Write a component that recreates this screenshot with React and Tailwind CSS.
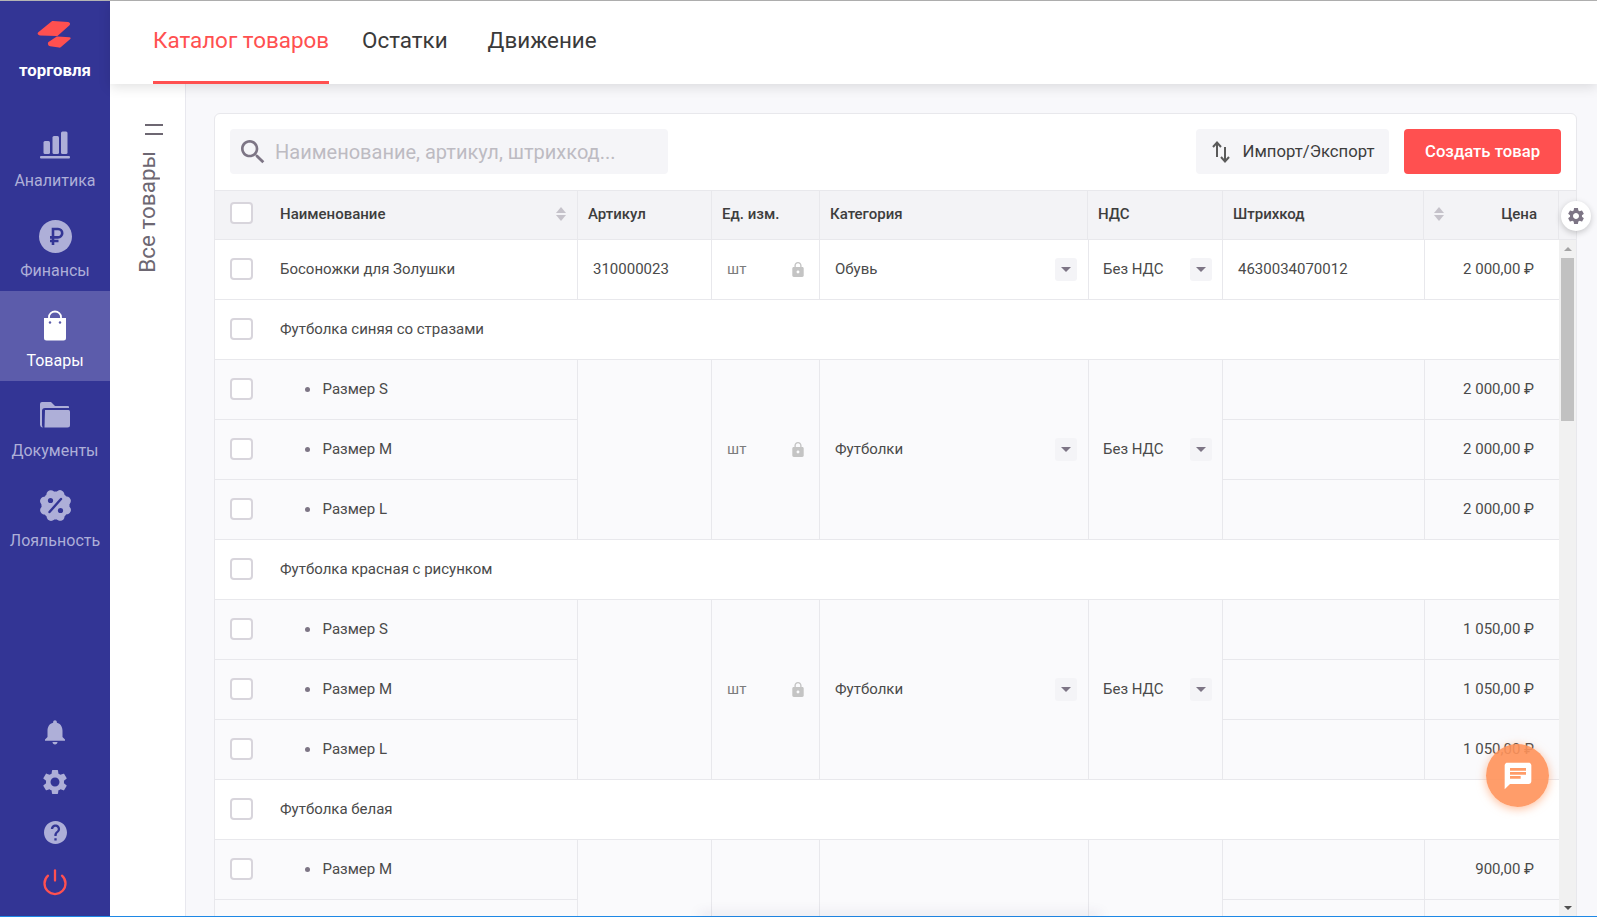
import React from "react";

const GEAR = "M19.14,12.94c0.04-0.3,0.06-0.61,0.06-0.94c0-0.32-0.02-0.64-0.07-0.94l2.03-1.58c0.18-0.14,0.23-0.41,0.12-0.61l-1.92-3.32c-0.12-0.22-0.37-0.29-0.59-0.22l-2.39,0.96c-0.5-0.38-1.03-0.7-1.62-0.94L14.4,2.81c-0.04-0.24-0.24-0.41-0.48-0.41h-3.84c-0.24,0-0.43,0.17-0.47,0.41L9.25,5.35C8.66,5.59,8.12,5.92,7.63,6.29L5.24,5.33c-0.22-0.08-0.47,0-0.59,0.22L2.74,8.87C2.62,9.08,2.66,9.34,2.86,9.48l2.03,1.58C4.84,11.36,4.8,11.69,4.8,12s0.02,0.64,0.07,0.94l-2.03,1.58c-0.18,0.14-0.23,0.41-0.12,0.61l1.92,3.32c0.12,0.22,0.37,0.29,0.59,0.22l2.39-0.96c0.5,0.38,1.03,0.7,1.62,0.94l0.36,2.54c0.05,0.24,0.24,0.41,0.48,0.41h3.84c0.24,0,0.44-0.17,0.47-0.41l0.36-2.54c0.59-0.24,1.13-0.56,1.62-0.94l2.39,0.96c0.22,0.08,0.47,0,0.59-0.22l1.92-3.32c0.12-0.22,0.07-0.47-0.12-0.61L19.14,12.94z M12,15.6c-1.98,0-3.6-1.62-3.6-3.6s1.62-3.6,3.6-3.6s3.6,1.62,3.6,3.6S13.98,15.6,12,15.6z";

function Logo() {
  return (
    <svg width="36" height="30" viewBox="0 0 36 30" className="block">
      <path d="M1 12.5 14.5 1.5c.5-.4 1-.5 1.6-.5l15 1c1.8.2 2.6 2 1.4 3.2L21 15.5c-.5.5-1 .6-1.6.5L3 15.5c-2-.2-3-1.8-2-3z" fill="#ff5050" />
      <path d="M11.500 22 19 17c.5-.3 1-.4 1.500-.4l12 .6c1.200.1 1.500 1.200.8 1.800L24 27c-.6.5-1.200.7-2 .6l-8.800-1.300c-2-.3-3-3-1.700-4.300z" fill="#ff5050" />
    </svg>
  );
}

const iconColor = "#aeafd8";
const navIcons = {
  chart: (
    <svg width="30" height="28" viewBox="0 0 30 28">
      <rect x="3.500" y="10" width="6.500" height="13" rx="1.500" fill={iconColor} />
      <rect x="12.500" y="5" width="6.500" height="18" rx="1.500" fill={iconColor} />
      <rect x="21" y="0.500" width="6.500" height="22.500" rx="1.500" fill={iconColor} />
      <rect x="0" y="25" width="30" height="2.500" rx="1" fill={iconColor} />
    </svg>
  ),
  ruble: (
    <svg width="33" height="33" viewBox="0 0 33 33">
      <circle cx="16.500" cy="16.500" r="16.500" fill={iconColor} />
      <path d="M14 25V9h5a4.200 4.200 0 0 1 0 8.400h-8M11 21h8.500" fill="none" stroke="#333595" strokeWidth="2.600" />
    </svg>
  ),
  bag: (
    <svg width="24" height="31" viewBox="0 0 24 31">
      <path d="M6 8V7a6 5.500 0 0 1 12 0v1" fill="none" stroke="#fff" strokeWidth="1.800" />
      <path d="M1 8h22v20a2.500 2.500 0 0 1-2.500 2.500h-17A2.500 2.500 0 0 1 1 28z" fill="#fff" />
      <circle cx="7" cy="12.500" r="1.200" fill="#5c5cab" />
      <circle cx="17" cy="12.500" r="1.200" fill="#5c5cab" />
    </svg>
  ),
  folder: (
    <svg width="30" height="26" viewBox="0 0 30 26">
      <path d="M0 2a2 2 0 0 1 2-2h9l4 4h13a1 1 0 0 1 1 1v1H5a3 3 0 0 0-3 3v14c0 1 .5 2 1 2.500A3 3 0 0 1 0 23z" fill={iconColor} />
      <path d="M5 8h23.500A1.500 1.500 0 0 1 30 9.500V23a2.500 2.500 0 0 1-2.500 2.500H4.500z" fill={iconColor} />
    </svg>
  ),
  percent: (
    <svg width="33" height="33" viewBox="0 0 33 33">
      <circle cx="16.500" cy="16.500" r="14" fill={iconColor} />
      {[0, 45, 90, 135, 180, 225, 270, 315].map(a => (
        <circle key={a} cx="16.500" cy="4.500" r="4.300" fill={iconColor} transform={`rotate(${a + 22} 16.500 16.500)`} />
      ))}
      <circle cx="11.500" cy="11.500" r="2.600" fill="#333595" />
      <circle cx="21.500" cy="21.500" r="2.600" fill="#333595" />
      <path d="M22 10 10.500 23" stroke="#333595" strokeWidth="2.400" strokeLinecap="round" />
    </svg>
  ),
};

const navItems = [
  { key: "chart", label: "Аналитика", slot: "pb-[6px]" },
  { key: "ruble", label: "Финансы", slot: "pb-[2px]" },
  { key: "bag", label: "Товары", active: true, slot: "pb-[4px]" },
  { key: "folder", label: "Документы", slot: "pb-[7px]" },
  { key: "percent", label: "Лояльность", slot: "pb-[3px]" },
];

function Sidebar() {
  return (
    <aside className="flex w-[110px] shrink-0 flex-col bg-[#333595]">
      <div className="flex h-[110px] flex-col items-center pt-[19px]">
        <Logo />
        <div className="mt-[10px] text-[16.800px] leading-[20px] font-bold text-white">торговля</div>
      </div>
      <nav className="flex flex-col">
        {navItems.map(item => (
          <div
            key={item.key}
            className={`flex h-[90px] flex-col items-center ${item.active ? "bg-[#5c5cab] text-white" : "text-[#aeafd8]"}`}
          >
            <div className={`flex h-[54px] items-end justify-center ${item.slot}`}>{navIcons[item.key]}</div>
            <div className="mt-[6px] text-[16px] leading-[20px]">{item.label}</div>
          </div>
        ))}
      </nav>
      <div className="mt-auto flex flex-col items-center pb-[20px]">
        <svg width="30" height="30" viewBox="0 0 24 24" fill={iconColor} className="mb-[20px]">
          <path d="M12 22c1.100 0 2-.9 2-2h-4c0 1.100.89 2 2 2zm6-6v-5c0-3.070-1.640-5.640-4.500-6.320V4c0-.83-.67-1.500-1.500-1.500s-1.500.67-1.500 1.500v.68C7.630 5.360 6 7.920 6 11v5l-2 2v1h16v-1l-2-2z" />
        </svg>
        <svg width="30" height="30" viewBox="0 0 24 24" fill={iconColor} fillRule="evenodd" className="mb-[24px]">
          <path d={GEAR} />
        </svg>
        <svg width="23" height="23" viewBox="2 2 20 20" fill={iconColor} className="mb-[25px]">
          <path d="M12 2C6.480 2 2 6.480 2 12s4.480 10 10 10 10-4.480 10-10S17.520 2 12 2zm1 17h-2v-2h2v2zm2.070-7.750l-.9.920C13.450 12.900 13 13.500 13 15h-2v-.5c0-1.100.45-2.100 1.170-2.830l1.240-1.260c.37-.36.59-.86.59-1.410 0-1.100-.9-2-2-2s-2 .9-2 2H8c0-2.210 1.790-4 4-4s4 1.790 4 4c0 .88-.36 1.680-.93 2.250z" />
        </svg>
        <svg width="26" height="27" viewBox="0 0 26 27" fill="none" stroke="#ff5050" strokeWidth="2.300" strokeLinecap="round">
          <path d="M6 6.700a10.500 10.500 0 1 0 14 0" />
          <path d="M13 1.500v10" />
        </svg>
      </div>
    </aside>
  );
}

function Tabs() {
  return (
    <header className="relative z-10 flex h-[83px] shrink-0 bg-white pl-[43px] text-[22.400px] leading-[78px] text-[#3a3a3a] shadow-[0_3px_12px_rgba(0,0,0,0.12)]">
      <div className="h-[83px] border-b-[3px] border-[#ff5050] text-[#ff5050]">Каталог товаров</div>
      <div className="ml-[33px]">Остатки</div>
      <div className="ml-[40px]">Движение</div>
    </header>
  );
}

function Checkbox() {
  return <span className="-mt-[2px] block h-[22px] w-[23px] shrink-0 rounded-[4px] border-2 border-[#d8d5dc] bg-white" />;
}

function Dropdown() {
  return (
    <span className="flex h-[23px] w-[22px] items-center justify-center rounded-[3px] bg-[#f4f4f7]">
      <span className="h-0 w-0 border-x-[5px] border-t-[5px] border-x-transparent border-t-[#7d7585]" />
    </span>
  );
}

function Lock() {
  return (
    <svg width="12" height="15" viewBox="4 1 16 21" fill="#c4c4c4">
      <path d="M18 8h-1V6c0-2.760-2.240-5-5-5S7 3.240 7 6v2H6c-1.100 0-2 .9-2 2v10c0 1.100.9 2 2 2h12c1.100 0 2-.9 2-2V10c0-1.100-.9-2-2-2zm-6 9c-1.100 0-2-.9-2-2s.9-2 2-2 2 .9 2 2-.9 2-2 2zm3.100-9H8.900V6c0-1.710 1.390-3.100 3.100-3.100 1.710 0 3.100 1.390 3.100 3.100v2z" />
    </svg>
  );
}

function SortArrows() {
  return (
    <span className="flex flex-col gap-[2px]">
      <span className="h-0 w-0 border-x-[5px] border-b-[6px] border-x-transparent border-b-[#c5c2ca]" />
      <span className="h-0 w-0 border-x-[5px] border-t-[6px] border-x-transparent border-t-[#c5c2ca]" />
    </span>
  );
}

const line = "border-b border-[#e8e8ec]";
const cellLine = "border-b border-r border-[#e8e8ec]";

function NameCell({ name, variant }) {
  return (
    <td className={`${variant ? cellLine : line + " border-r"} p-0 pl-[15px]`}>
      <div className="flex items-center">
        <Checkbox />
        {variant ? (
          <>
            <span className="ml-[52px] h-[5px] w-[5px] rounded-full bg-[#7d7585]" />
            <span className="ml-[12.500px]">{name}</span>
          </>
        ) : (
          <span className="ml-[27px]">{name}</span>
        )}
      </div>
    </td>
  );
}

function UnitCell(props) {
  return (
    <td {...props} className={`${cellLine} p-0 pr-[15px] pl-[15px]`}>
      <div className="flex items-center justify-between text-[#7c7c7c]">
        шт
        <Lock />
      </div>
    </td>
  );
}

function SelectCell({ value, pad = "pr-[11px] pl-[15px]", ...props }) {
  return (
    <td {...props} className={`${cellLine} p-0 ${pad}`}>
      <div className="flex items-center justify-between">
        {value}
        <Dropdown />
      </div>
    </td>
  );
}

// last group runs past the bottom of the window, only its first row shows
function Group({ title, category, rows }) {
  return (
    <>
      <tr className="h-[60px] bg-white">
        <td colSpan={7} className={`${line} p-0 pl-[15px]`}>
          <div className="flex items-center">
            <Checkbox />
            <span className="ml-[27px]">{title}</span>
          </div>
        </td>
      </tr>
      {rows.map((r, i) => (
        <tr key={i} className="h-[60px] bg-[#fafafc]">
          {r.size ? <NameCell name={r.size} variant /> : <td className={cellLine} />}
          {i === 0 && (
            <>
              <td rowSpan={rows.length} className={cellLine} />
              {category ? <UnitCell rowSpan={rows.length} /> : <td rowSpan={rows.length} className={cellLine} />}
              {category ? <SelectCell rowSpan={rows.length} value={category} /> : <td rowSpan={rows.length} className={cellLine} />}
              {category ? <SelectCell rowSpan={rows.length} value="Без НДС" pad="pr-[10px] pl-[14px]" /> : <td rowSpan={rows.length} className={cellLine} />}
            </>
          )}
          <td className={cellLine} />
          <td className={`${line} p-0 pr-[25px] text-right`}>{r.price}</td>
        </tr>
      ))}
    </>
  );
}

const groups = [
  {
    title: "Футболка синяя со стразами",
    category: "Футболки",
    rows: [
      { size: "Размер S", price: "2 000,00 ₽" },
      { size: "Размер M", price: "2 000,00 ₽" },
      { size: "Размер L", price: "2 000,00 ₽" },
    ],
  },
  {
    title: "Футболка красная с рисунком",
    category: "Футболки",
    rows: [
      { size: "Размер S", price: "1 050,00 ₽" },
      { size: "Размер M", price: "1 050,00 ₽" },
      { size: "Размер L", price: "1 050,00 ₽" },
    ],
  },
  {
    title: "Футболка белая",
    rows: [{ size: "Размер M", price: "900,00 ₽" }, {}, {}],
  },
];

function TableHead() {
  const cell = "flex items-center border-r border-[#e8e8ec] px-[10px] pb-[2px]";
  return (
    <div className="grid h-[50px] shrink-0 grid-cols-[363px_134px_108px_268px_135px_201px_135px_1fr] border-y border-[#e8e8ec] bg-[#f3f3f6] text-[15px] font-medium text-[#3d3d3d]">
      <div className={`${cell} !pr-[11px] !pl-[15px]`}>
        <Checkbox />
        <span className="ml-[27px] flex-1">Наименование</span>
        <SortArrows />
      </div>
      <div className={cell}>Артикул</div>
      <div className={cell}>Ед. изм.</div>
      <div className={cell}>Категория</div>
      <div className={cell}>НДС</div>
      <div className={cell}>Штрихкод</div>
      <div className={`${cell} justify-between !pr-[21px]`}>
        <SortArrows />
        Цена
      </div>
      <div />
    </div>
  );
}

function Scrollbar() {
  return (
    <div className="flex w-[17px] shrink-0 flex-col items-center bg-[#f1f1f1]">
      <span className="mt-[7px] h-0 w-0 border-x-[4px] border-b-[4px] border-x-transparent border-b-[#a3a3a3]" />
      <span className="mt-[7px] h-[163px] w-[13px] bg-[#c1c1c1]" />
      <span className="mt-[485px] h-0 w-0 border-x-[4px] border-t-[4px] border-x-transparent border-t-[#505050]" />
    </div>
  );
}

function CatalogCard() {
  return (
    <section className="relative flex h-[840px] flex-col rounded-t-[6px] border border-[#e8e8ec] bg-white font-normal">
      <div className="flex h-[76px] shrink-0 items-start justify-between px-[15px] pt-[15px]">
        <div className="flex h-[45px] w-[438px] items-center rounded-[4px] bg-[#f5f5f8] pl-[11px]">
          <svg width="24" height="24" viewBox="3 3 18 18" fill="#7d7585">
            <path d="M15.500 14h-.79l-.28-.27C15.410 12.590 16 11.110 16 9.500 16 5.910 13.090 3 9.500 3S3 5.910 3 9.500 5.910 16 9.500 16c1.610 0 3.090-.59 4.230-1.570l.27.28v.79l5 4.990L20.490 19l-4.990-5zm-6 0C7.010 14 5 11.990 5 9.500S7.010 5 9.500 5 14 7.010 14 9.500 11.990 14 9.500 14z" />
          </svg>
          <span className="ml-[10px] text-[20px] text-[#bdbbc2]">Наименование, артикул, штрихкод...</span>
        </div>
        <div className="flex gap-[15px]">
          <div className="flex h-[45px] w-[193px] items-center justify-center gap-[12px] rounded-[4px] bg-[#f5f5f8] text-[16.700px] text-[#3d3d3d]">
            <svg width="20" height="24" viewBox="0 0 20 24" fill="none" stroke="#5a5a5a" strokeWidth="2">
              <path d="M6 17V3M2 7l4-4.500L10 7" />
              <path d="M14 7v14M10 17l4 4.500 4-4.500" />
            </svg>
            Импорт/Экспорт
          </div>
          <div className="flex h-[45px] w-[157px] items-center justify-center rounded-[4px] bg-[#ff5050] text-[16.700px] font-medium text-white">
            Создать товар
          </div>
        </div>
      </div>
      <TableHead />
      <div className="flex min-h-0 flex-1 overflow-hidden text-[15px] text-[#4a4a4a]">
        <table className="w-[1344px] shrink-0 table-fixed border-separate border-spacing-0 self-start">
          <colgroup>
            <col className="w-[363px]" />
            <col className="w-[134px]" />
            <col className="w-[108px]" />
            <col className="w-[269px]" />
            <col className="w-[134px]" />
            <col className="w-[202px]" />
            <col className="w-[134px]" />
          </colgroup>
          <tbody>
            <tr className="h-[60px] bg-white">
              <NameCell name="Босоножки для Золушки" />
              <td className={`${cellLine} p-0 pl-[15px]`}>310000023</td>
              <UnitCell />
              <SelectCell value="Обувь" />
              <SelectCell value="Без НДС" pad="pr-[10px] pl-[14px]" />
              <td className={`${cellLine} p-0 pl-[15px]`}>4630034070012</td>
              <td className={`${line} p-0 pr-[25px] text-right`}>2 000,00 ₽</td>
            </tr>
            {groups.map(g => (
              <Group key={g.title} {...g} />
            ))}
          </tbody>
        </table>
        <Scrollbar />
      </div>
      <button className="absolute top-[87px] left-[1346px] flex h-[30px] w-[30px] items-center justify-center rounded-full bg-white shadow-[0_2px_6px_rgba(0,0,0,0.2)]">
        <svg width="20" height="20" viewBox="0 0 24 24" fill="#7d7585" fillRule="evenodd">
          <path d={GEAR} />
        </svg>
      </button>
    </section>
  );
}

export default function App() {
  return (
    <div className="relative flex h-[917px] flex-col overflow-hidden bg-white font-['Roboto',sans-serif]">
      <div className="h-px shrink-0 bg-[#b4b4b4]" />
      <div className="flex min-h-0 flex-1">
        <Sidebar />
        <div className="flex min-w-0 flex-1 flex-col">
          <Tabs />
          <div className="flex min-h-0 flex-1">
            <div className="flex w-[76px] shrink-0 flex-col border-r border-[#e8e8ee] bg-white pt-[40px]">
              <div className="ml-[35px] flex w-[18px] flex-col gap-[7px]">
                <span className="h-[2px] bg-[#6d6772]" />
                <span className="h-[2px] bg-[#6d6772]" />
              </div>
              <div className="mt-[16px] ml-[24px] rotate-180 self-start text-[22.500px] leading-[26px] text-[#6d6772] [writing-mode:vertical-rl]">
                Все товары
              </div>
            </div>
            <div className="min-w-0 flex-1 overflow-hidden bg-[#f8f8fb] pt-[29px] pr-[20px] pl-[28px]">
              <CatalogCard />
            </div>
          </div>
        </div>
      </div>
      <div className="h-px shrink-0 bg-[#1e88e5]" />

      <button className="absolute top-[744px] left-[1486px] flex h-[63px] w-[63px] items-center justify-center rounded-full bg-[#ff9259]/90 shadow-[0_2px_10px_rgba(255,146,89,0.6)]">
        <svg width="32" height="32" viewBox="0 0 24 24" fill="#fff">
          <path d="M20 2H4c-1.100 0-1.990.9-1.990 2L2 22l4-4h14c1.100 0 2-.9 2-2V4c0-1.100-.9-2-2-2zM6 9h12v2H6V9zm8 5H6v-2h8v2zm4-6H6V6h12v2z" />
        </svg>
      </button>
      <div className="absolute top-[917px] left-[700px] h-[2px] w-[400px] shadow-[0_-2px_12px_rgba(70,50,110,0.35)]" />
    </div>
  );
}
